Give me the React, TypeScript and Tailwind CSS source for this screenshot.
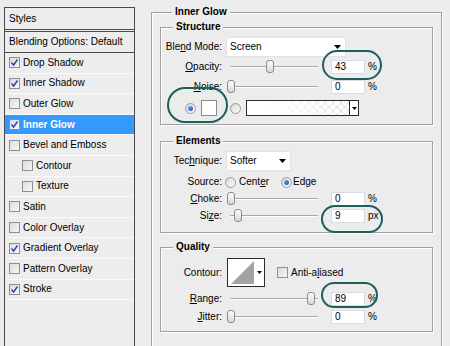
import type { ReactNode } from 'react'

const STYLE_ROWS = [
  { label: 'Drop Shadow', checked: true },
  { label: 'Inner Shadow', checked: true },
  { label: 'Outer Glow', checked: false },
  { label: 'Inner Glow', checked: true, active: true },
  { label: 'Bevel and Emboss', checked: false },
  { label: 'Contour', checked: false, indent: true },
  { label: 'Texture', checked: false, indent: true },
  { label: 'Satin', checked: false },
  { label: 'Color Overlay', checked: false },
  { label: 'Gradient Overlay', checked: true },
  { label: 'Pattern Overlay', checked: false },
  { label: 'Stroke', checked: true },
]

function CheckBox({ checked }: { checked: boolean }) {
  return (
    <span className="flex h-[11px] w-[11px] flex-shrink-0 items-center justify-center border border-[#8e8f8f] bg-gradient-to-br from-[#dcdcdc] to-[#f7f7f7]">
      {checked && (
        <svg width="9" height="9" viewBox="0 0 9 9" fill="none" aria-hidden>
          <path d="M1.5 4.5 L3.6 7 L7.5 1.5" stroke="#2446a8" strokeWidth="1.4" />
        </svg>
      )}
    </span>
  )
}

function Radio({ checked }: { checked: boolean }) {
  return (
    <span className="flex h-[11px] w-[11px] flex-shrink-0 items-center justify-center rounded-full border border-[#9a9a9a] bg-gradient-to-br from-[#d8d8d8] to-[#fbfbfb]">
      {checked && <span className="h-[5px] w-[5px] rounded-full bg-gradient-to-br from-[#6fb7ff] to-[#0a4fa8]" />}
    </span>
  )
}

function Group({ title, className = '', children }: { title: string; className?: string; children: ReactNode }) {
  return (
    <fieldset
      className={`border border-[#a0a0a0] shadow-[inset_1px_1px_0_#fff,1px_1px_0_#fff] ${className}`}
    >
      <legend className="ml-[12px] bg-[#ececec] px-[3px] text-[10px] font-bold leading-[12px]">{title}</legend>
      {children}
    </fieldset>
  )
}

function Label({ children }: { children: ReactNode }) {
  return <span className="w-[61px] flex-shrink-0 text-right">{children}</span>
}

function Slider({ thumb }: { thumb: number }) {
  return (
    <div className="relative ml-[4px] flex h-[14px] w-[96px] items-center px-[4px]">
      <div className="h-[2px] w-full border-t border-[#a6a6a6] border-b border-b-white" />
      <span
        className="absolute top-0 h-[13px] w-[8px] rounded-[3px] border border-[#8b8b8b] bg-gradient-to-b from-[#fdfdfd] to-[#d6d6d6]"
        style={{ left: thumb }}
      />
    </div>
  )
}

function NumField({ value, unit }: { value: string; unit: string }) {
  return (
    <>
      <span className="ml-[9px] flex h-[14px] w-[34px] items-center border border-[#d9dde3] bg-white pl-[3px]">{value}</span>
      <span className="ml-[3px]">{unit}</span>
    </>
  )
}

function SliderRow({ label, thumb, value, unit }: { label: ReactNode; thumb: number; value: string; unit: string }) {
  return (
    <div className="flex h-[14px] items-center">
      <Label>{label}</Label>
      <Slider thumb={thumb} />
      <NumField value={value} unit={unit} />
    </div>
  )
}

function DownArrow() {
  return (
    <svg width="7" height="4" viewBox="0 0 7 4" aria-hidden>
      <path d="M0 0 H7 L3.5 4 Z" fill="#000" />
    </svg>
  )
}

function Ring({ className }: { className: string }) {
  return <span className={`pointer-events-none absolute rounded-full border-2 border-[#1e5e5b] ${className}`} />
}

export default function App() {
  return (
    <div className="relative flex h-[346px] w-[450px] overflow-hidden bg-[#ececec] font-['Liberation_Sans',Arial,sans-serif] text-[10px] leading-[12px] text-black">
      {/* Styles list */}
      <div className="ml-[4px] mt-[7px] flex h-[360px] w-[131px] flex-shrink-0 flex-col border border-[#4b4b4b] bg-[#ededed]">
        <div className="flex h-[24px] flex-shrink-0 items-center border-b-[3px] border-double border-[#4b4b4b] px-[4px]">Styles</div>
        <div className="flex h-[21px] flex-shrink-0 items-center border-b border-[#4b4b4b] px-[4px]">Blending Options: Default</div>
        {STYLE_ROWS.map((row) => (
          <div
            key={row.label}
            className={`flex h-[20.6px] flex-shrink-0 items-center gap-[3px] border-b border-[#fafafa] ${
              row.indent ? 'pl-[17px]' : 'pl-[4px]'
            } ${row.active ? 'bg-[#3399ff] font-bold text-white' : ''}`}
          >
            <CheckBox checked={row.checked} />
            <span>{row.label}</span>
          </div>
        ))}
      </div>

      {/* Inner Glow settings */}
      <Group title="Inner Glow" className="ml-[16px] mt-[6px] h-[360px] w-[291px] flex-shrink-0 px-[8px]">
        <Group title="Structure" className="mt-[3px] px-0 pb-[8px]">
          <div className="flex flex-col">
            <div className="mt-[4px] flex h-[20px] items-center">
              <Label>
                Ble<u>n</u>d Mode:
              </Label>
              <div className="ml-[4px] flex h-[20px] w-[120px] items-center justify-between border border-[#e2e2e2] bg-white pl-[3px] pr-[4px]">
                <span>Screen</span>
                <DownArrow />
              </div>
            </div>
            <div className="mt-[3px]">
              <SliderRow label={<><u>O</u>pacity:</>} thumb={40} value="43" unit="%" />
            </div>
            <div className="mt-[6px]">
              <SliderRow label={<><u>N</u>oise:</>} thumb={1} value="0" unit="%" />
            </div>
            <div className="mt-[6px] flex h-[16px] items-center">
              <span className="ml-[24px]">
                <Radio checked />
              </span>
              <span className="ml-[5px] h-[16px] w-[16px] border border-[#8a8a8a] bg-white" />
              <span className="ml-[13px]">
                <Radio checked={false} />
              </span>
              <div className="ml-[5px] flex h-[16px] w-[113px] border border-[#2b2b2b]">
                <span className="flex-1 bg-[linear-gradient(to_right,#fff_20%,rgba(255,255,255,0.2)),conic-gradient(#e4e4e4_25%,#fff_0_50%,#e4e4e4_0_75%,#fff_0)] bg-[length:100%_100%,8px_8px]" />
                <span className="flex w-[9px] items-center justify-center border-l border-[#2b2b2b] bg-white">
                  <svg width="5" height="3" viewBox="0 0 5 3" aria-hidden>
                    <path d="M0 0 H5 L2.5 3 Z" fill="#000" />
                  </svg>
                </span>
              </div>
            </div>
          </div>
        </Group>

        <Group title="Elements" className="mt-[10px] pb-[9px]">
          <div className="flex flex-col">
            <div className="mt-[4px] flex h-[20px] items-center">
              <Label>
                Tec<u>h</u>nique:
              </Label>
              <div className="ml-[4px] flex h-[20px] w-[65px] items-center justify-between border border-[#e2e2e2] bg-white pl-[3px] pr-[4px]">
                <span>Softer</span>
                <DownArrow />
              </div>
            </div>
            <div className="mt-[5px] flex h-[12px] items-center">
              <Label>Source:</Label>
              <span className="ml-[3px]">
                <Radio checked={false} />
              </span>
              <span className="ml-[3px]">
                Cent<u>e</u>r
              </span>
              <span className="ml-[12px]">
                <Radio checked />
              </span>
              <span className="ml-[1px]">Edge</span>
            </div>
            <div className="mt-[4px]">
              <SliderRow label={<><u>C</u>hoke:</>} thumb={1} value="0" unit="%" />
            </div>
            <div className="mt-[3px]">
              <SliderRow label={<>Si<u>z</u>e:</>} thumb={8} value="9" unit="px" />
            </div>
          </div>
        </Group>

        <Group title="Quality" className="mt-[8px] pb-[7px]">
          <div className="flex flex-col">
            <div className="mt-[5px] flex h-[29px] items-center">
              <Label>Contour:</Label>
              <div className="ml-[5px] flex h-[29px] w-[38px] border border-[#2b2b2b] bg-white">
                <svg width="27" height="27" viewBox="0 0 27 27" aria-hidden>
                  <path d="M3 25 L26 2 V25 Z" fill="#a3a3a3" />
                </svg>
                <span className="flex flex-1 items-center justify-center">
                  <svg width="5" height="3" viewBox="0 0 5 3" aria-hidden>
                    <path d="M0 0 H5 L2.5 3 Z" fill="#000" />
                  </svg>
                </span>
              </div>
              <span className="ml-[12px]">
                <CheckBox checked={false} />
              </span>
              <span className="ml-[3px]">
                Anti-a<u>l</u>iased
              </span>
            </div>
            <div className="mt-[5px]">
              <SliderRow label={<><u>R</u>ange:</>} thumb={81} value="89" unit="%" />
            </div>
            <div className="mt-[4px]">
              <SliderRow label={<><u>J</u>itter:</>} thumb={1} value="0" unit="%" />
            </div>
          </div>
        </Group>
      </Group>

      {/* hand-drawn highlight rings */}
      <Ring className="left-[322px] top-[50px] h-[30px] w-[60px]" />
      <Ring className="left-[167px] top-[87px] h-[36px] w-[61px]" />
      <Ring className="left-[321px] top-[205px] h-[28px] w-[62px]" />
      <Ring className="left-[321px] top-[282px] h-[26px] w-[57px]" />
    </div>
  )
}
